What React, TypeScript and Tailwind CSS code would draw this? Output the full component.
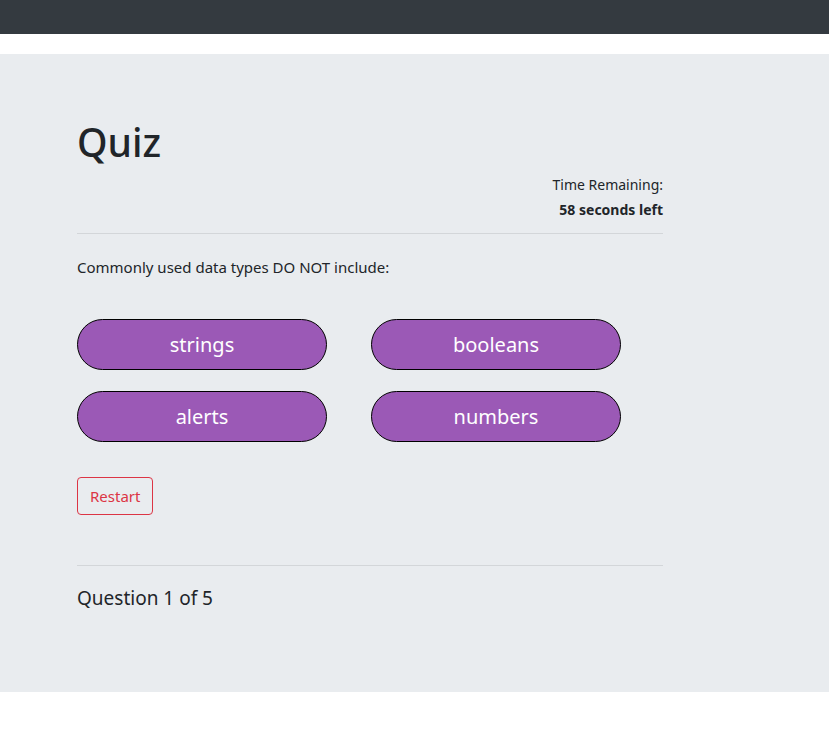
import React from 'react';

const answers = ['strings', 'booleans', 'alerts', 'numbers'];

const App: React.FC = () => {
  return (
    <div className="min-h-[741px] bg-white text-[#212529]" style={{ fontFamily: '"Noto Sans", "Open Sans", sans-serif' }}>
      <nav className="h-[34px] bg-[#343a40]" />

      <section className="mt-5 bg-[#e9ecef] pt-16 pb-[79px]">
        <div className="ml-[77px] w-[586px]">
          <h1 className="text-[39px] font-medium leading-[48px]">Quiz</h1>

          <div className="mt-[6px] text-right text-[14px] leading-[25px]">
            <p>Time Remaining:</p>
            <p className="font-bold">58 seconds left</p>
          </div>

          <hr className="mt-[11px] border-t border-[#d3d6d9]" />

          <p className="mt-[21px] text-[15px] leading-6">Commonly used data types DO NOT include:</p>

          <div className="mt-[40px] grid w-[544px] grid-cols-2 gap-x-[44px] gap-y-[21px]">
            {answers.map((a) => (
              <button
                key={a}
                className="h-[51px] w-[250px] rounded-full border border-black bg-[#9b59b6] text-[20px] text-white"
              >
                {a}
              </button>
            ))}
          </div>

          <button className="mt-[35px] h-[38px] rounded-[4px] border border-[#dc3545] px-3 text-[15px] text-[#dc3545]">
            Restart
          </button>

          <hr className="mt-[50px] border-t border-[#d3d6d9]" />

          <p className="mt-[17px] text-[19px] leading-[30px]">Question 1 of 5</p>
        </div>
      </section>
    </div>
  );
};

export default App;
